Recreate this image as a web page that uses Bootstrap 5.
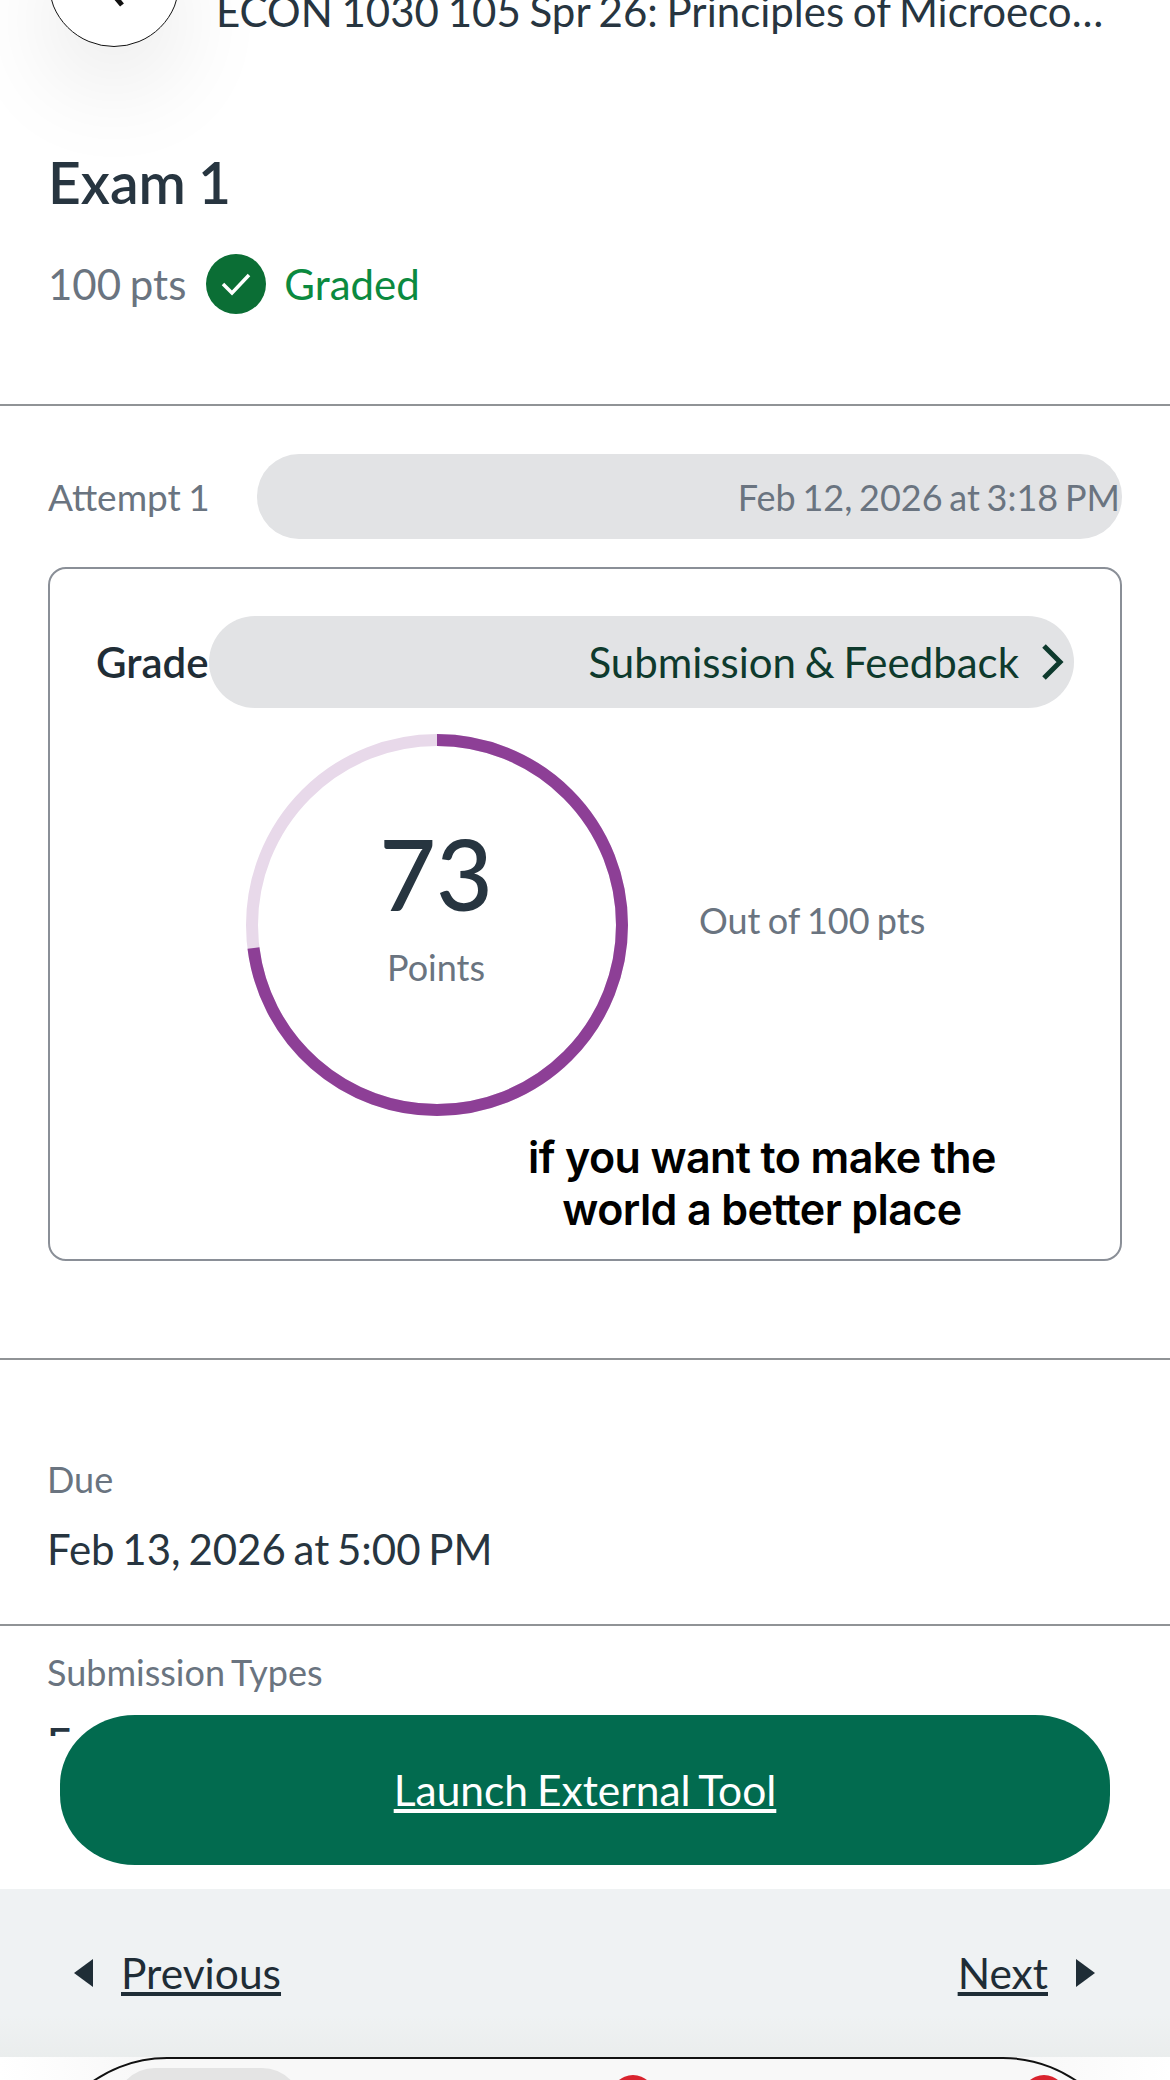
<!DOCTYPE html>
<html lang="en">
<head>
  <meta charset="UTF-8">
  <title>Exam 1</title>
  <link href="https://cdn.jsdelivr.net/npm/bootstrap@5.3.0/dist/css/bootstrap.min.css" rel="stylesheet">
  <style>
    html, body { height: 2080px; overflow: hidden; }
    body { font-family: "Lato", "Liberation Sans", sans-serif; color: #273540; background: #fff; position: relative; word-spacing: -2px; }
    .page-head { height: 47px; padding-left: 48px; }
    .back-circle { width: 132px; height: 132px; margin-top: -85px; border: 1.5px solid #111; border-radius: 50%; background: #fff; box-shadow: 0 40px 100px rgba(0,0,0,.09); flex: none; }
    .course-name { font-size: 42px; line-height: 46px; margin: -12px 0 0 36px; width: 891px; white-space: nowrap; overflow: hidden; text-overflow: ellipsis; }
    .exam-title { font-size: 57px; font-weight: 600; line-height: 64px; margin: 103px 0 0 48px; }
    .exam-meta { font-size: 42px; line-height: 60px; margin: 40px 0 0 48px; color: #6a7480; }
    .ok-dot { width: 60px; height: 60px; border-radius: 50%; background: #0b6e35; margin: 0 18px 0 20px; }
    .graded { color: #0b8a3f; }
    .rule-line { border-top: 2px solid #909396; }
    .rule-head { margin-top: 90px; }
    .rule-card { margin-top: 97px; }
    .rule-due { margin-top: 50px; }
    .attempt-row { margin: 48px 48px 0 48px; font-size: 36px; color: #6a7480; }
    .attempt-label { font-size: 37px; }
    .grey-pill { background: #e2e3e5; border-radius: 42px; }
    .attempt-date { width: 865px; height: 85px; padding-right: 2px; word-spacing: -2.5px; }
    .grade-card { margin: 28px 48px 0 48px; height: 694px; border: 2px solid #8a8f97; border-radius: 18px; padding: 47px 46px 0 47px; }
    .grade-label { font-size: 42px; font-weight: 600; width: 112px; margin-left: -1px; margin-right: 1px; color: #1f2d36; flex: none; }
    .feedback-pill { height: 92px; font-size: 42px; color: #0e3a2d; padding-right: 8px; border-radius: 46px; }
    .feedback-pill svg { margin-left: 19px; }
    .ring-wrap { width: 384px; height: 384px; margin: 25px 0 0 148px; flex: none; }
    .ring-text { inset: 0 2px 0 0; }
    .ring-num { font-size: 98px; font-weight: 500; line-height: 100px; margin-top: -38px; }
    .ring-sub { font-size: 36px; line-height: 44px; margin-top: 22px; color: #6a7480; }
    .out-of { font-size: 36px; color: #6a7480; margin: 14px 0 0 70px; }
    .overlay-caption { font-family: "Inter", "Liberation Sans", sans-serif; font-size: 43px; font-weight: 600; line-height: 52px; color: #000; margin: 14px 0 0 400px; width: 530px; letter-spacing: -.6px; word-spacing: 0; }
    .field-label { font-size: 36px; line-height: 44px; color: #6a7480; margin-left: 47px; }
    .field-value { font-size: 42px; line-height: 50px; margin-left: 47px; word-spacing: -3px; }
    .due-label { margin-top: 97px; }
    .due-value { margin-top: 23px; }
    .types-label { margin-top: 24px; }
    /* the scrolling content ends here, the rest of the line is cut off */
    .types-value { margin-top: 24px; height: 18px; overflow: hidden; font-weight: 500; }
    .launch-btn { position: absolute; left: 60px; top: 1715px; width: 1050px; height: 150px; background: #026b4f; border-radius: 75px / 70px; color: #fff; font-size: 42.5px; }
    .pager-band { position: absolute; left: 0; right: 0; top: 1889px; height: 168px; background: linear-gradient(#eff2f3 75%, #eaeded); padding: 0 75px 0 74px; font-size: 42.5px; color: #1f2d36; }
    .pager-band a, .launch-btn a { color: inherit; }
    .pager-link { gap: 27px; }
    .tab-area { position: absolute; left: 0; right: 0; top: 2057px; height: 23px; background: linear-gradient(90deg, #fff, #f8f8f8 12%, #f8f8f8 88%, #fff); overflow: hidden; }
    .tab-shell { position: absolute; left: 37px; right: 37px; top: 0; height: 300px; border: 2px solid #111; border-radius: 130px; }
    .tab-active { position: absolute; left: 76px; top: 9px; width: 187px; height: 80px; border-radius: 40px 40px 0 0; background: #e4e4e4; }
    .tab-badge { position: absolute; top: 16px; width: 44px; height: 44px; border-radius: 50%; background: #d9232e; }
    .badge-one { left: 572px; }
    .badge-two { left: 983px; }
  </style>
</head>
<body>

  <!-- Course header, cut by the top of the page -->
  <div class="page-head d-flex">
    <div class="back-circle d-flex align-items-center justify-content-center">
      <svg width="44" height="60" viewBox="0 0 44 60" fill="none" stroke="#111" stroke-width="5"><path d="M34 4 L10 30 L30 54"/></svg>
    </div>
    <div class="course-name">ECON 1030 105 Spr 26: Principles of Microeconomics</div>
  </div>

  <h1 class="exam-title">Exam 1</h1>
  <div class="exam-meta d-flex align-items-center">
    <span>100 pts</span>
    <span class="ok-dot d-flex align-items-center justify-content-center">
      <svg width="32" height="26" viewBox="0 0 32 26" fill="none" stroke="#fff" stroke-width="3.5"><path d="M3 13 L12 22 L29 4"/></svg>
    </span>
    <span class="graded">Graded</span>
  </div>
  <div class="rule-line rule-head"></div>

  <!-- Attempt -->
  <div class="attempt-row d-flex align-items-center justify-content-between">
    <span class="attempt-label">Attempt 1</span>
    <div class="grey-pill attempt-date d-flex align-items-center justify-content-end">Feb 12, 2026 at 3:18 PM</div>
  </div>

  <div class="grade-card">
    <div class="d-flex align-items-center">
      <span class="grade-label">Grade</span>
      <div class="grey-pill feedback-pill flex-grow-1 d-flex align-items-center justify-content-end">
        <span>Submission &amp; Feedback</span>
        <svg width="28" height="38" viewBox="0 0 28 38" fill="none" stroke="#0e3a2d" stroke-width="5"><path d="M6 3 L22 19 L6 35"/></svg>
      </div>
    </div>
    <div class="d-flex align-items-center">
      <div class="ring-wrap position-relative">
        <svg width="384" height="384" viewBox="0 0 384 384" fill="none" stroke-width="12">
          <circle cx="192" cy="192" r="185" stroke="#e8d9ea"/>
          <circle cx="192" cy="192" r="185" stroke="#8d3f96" pathLength="100" stroke-dasharray="73 27" transform="rotate(-90 192 192)"/>
        </svg>
        <div class="ring-text position-absolute d-flex flex-column align-items-center justify-content-center">
          <div class="ring-num">73</div>
          <div class="ring-sub">Points</div>
        </div>
      </div>
      <div class="out-of">Out of 100 pts</div>
    </div>
    <div class="overlay-caption text-center">if you want to make the<br>world a better place</div>
  </div>

  <div class="rule-line rule-card"></div>

  <!-- Details -->
  <div class="field-label due-label">Due</div>
  <div class="field-value due-value">Feb 13, 2026 at 5:00 PM</div>
  <div class="rule-line rule-due"></div>
  <div class="field-label types-label">Submission Types</div>
  <div class="field-value types-value">External Tool</div>

  <!-- Floating action -->
  <div class="launch-btn d-flex align-items-center justify-content-center">
    <a href="#">Launch External Tool</a>
  </div>

  <!-- Pager -->
  <div class="pager-band d-flex align-items-center justify-content-between">
    <div class="pager-link d-flex align-items-center">
      <svg width="20" height="28" viewBox="0 0 20 28" fill="#1f2d36"><path d="M19 0 V28 L0 14 Z"/></svg>
      <a href="#">Previous</a>
    </div>
    <div class="pager-link d-flex align-items-center">
      <a href="#">Next</a>
      <svg width="20" height="28" viewBox="0 0 20 28" fill="#1f2d36"><path d="M1 0 V28 L20 14 Z"/></svg>
    </div>
  </div>

  <!-- Bottom tab bar, cut by the page edge -->
  <div class="tab-area">
    <div class="tab-shell">
      <div class="tab-active"></div>
      <div class="tab-badge badge-one"></div>
      <div class="tab-badge badge-two"></div>
    </div>
  </div>

  <script src="https://cdn.jsdelivr.net/npm/bootstrap@5.3.0/dist/js/bootstrap.bundle.min.js"></script>
</body>
</html>
